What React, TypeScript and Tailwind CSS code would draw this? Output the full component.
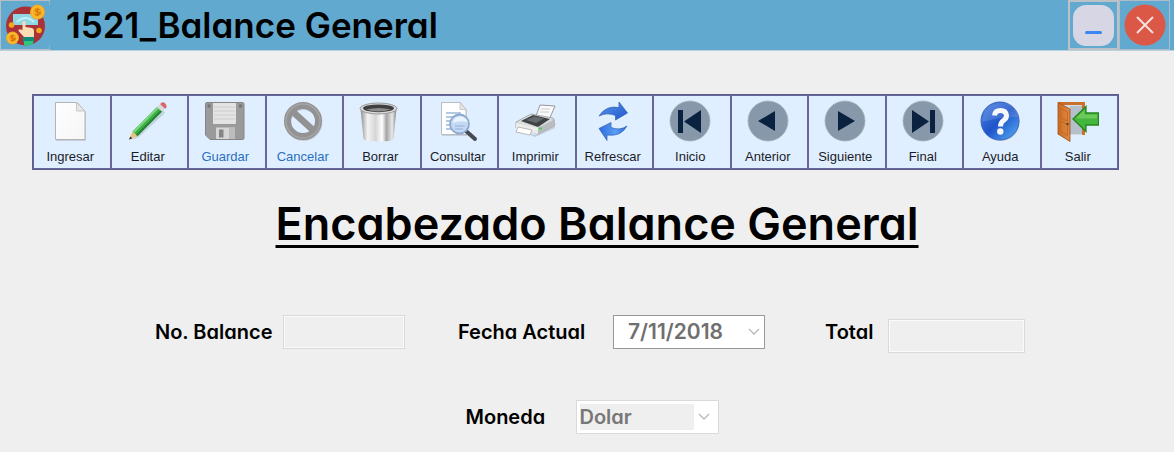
import type { ReactNode } from "react";

type Tool = { label: string; icon: ReactNode; disabled?: boolean };

function Icon({ children }: { children: ReactNode }) {
  return (
    <svg viewBox="0 0 42 42" className="size-[42px]" aria-hidden="true">
      {children}
    </svg>
  );
}

function PageIcon() {
  return (
    <Icon>
      <defs>
        <linearGradient id="page" x1="0" y1="0" x2="1" y2="1">
          <stop offset="0" stopColor="#fff" />
          <stop offset="1" stopColor="#f5f5f5" />
        </linearGradient>
      </defs>
      <path d="M7 3h22l8 9v29H7z" fill="#8b98a5" opacity=".35" />
      <path d="M6.500 2.500h21.500l8 9v28h-29.500z" fill="url(#page)" stroke="#b4b4b4" />
      <path d="M27.500 2.500v8.500h8.500z" fill="#e6e6e6" stroke="#bdbdbd" strokeWidth=".8" />
    </Icon>
  );
}

function PencilIcon() {
  return (
    <Icon>
      <path d="M5 40 36 10l2 3L12 37z" fill="#90a4ae" opacity=".4" />
      <path d="M2 39.500 5.500 31.500l5 4.500z" fill="#e8c27c" />
      <path d="M2 39.500 3.200 36.500l2.300 2z" fill="#333" />
      <path d="M5.500 31.500 30 7l5 4.500L10.500 36z" fill="#3fae49" />
      <path d="M5.500 31.500 30 7l1.700 1.500L7.200 33z" fill="#7bd67c" />
      <path d="M9 34.700 33.500 10.200l1.500 1.300L10.500 36z" fill="#23812e" />
      <path d="m30 7 3-3 5.200 4.600-3.200 2.900z" fill="#d7d9dc" />
      <path d="m33 4 1.500-1.300q2-1 3.800.8t1.200 4l-1.300 1.200z" fill="#d9666b" />
    </Icon>
  );
}

function DiskIcon() {
  return (
    <Icon>
      <path d="M2.500 2.500h36q1.500 0 1.500 1.500v34q0 1.500-1.500 1.500H6L1.500 35V4q0-1.500 1-1.500z" fill="#9a9a9a" stroke="#858585" />
      <path d="M9 3h23v20q0 1-1 1H10q-1 0-1-1z" fill="#e3e3e3" />
      <path d="M10 7h21M10 11h21M10 15h21M10 19h21" stroke="#cecece" />
      <path d="M3.500 4.500h3v3h-3zM35 4.500h3v3h-3z" fill="#737373" />
      <path d="M12 27.500h19V39H12z" fill="#d6d6d6" />
      <path d="M15 29.500h4.500v8H15z" fill="#858585" />
      <path d="M25 28h6v11h-6z" fill="#bcbcbc" />
    </Icon>
  );
}

function BlockIcon() {
  return (
    <Icon>
      <circle cx="21.500" cy="22" r="15.500" fill="none" stroke="#8a9299" strokeWidth="7" opacity=".3" />
      <circle cx="21" cy="21" r="15.500" fill="none" stroke="#929292" strokeWidth="7" />
      <path d="m10 11 22 20" stroke="#929292" strokeWidth="6.500" />
      <circle cx="21" cy="21" r="17" fill="none" stroke="#a5a5a5" strokeWidth="1.500" />
    </Icon>
  );
}

function BinIcon() {
  return (
    <Icon>
      <defs>
        <linearGradient id="bin">
          <stop offset="0" stopColor="#8f8f8f" />
          <stop offset=".2" stopColor="#f4f4f4" />
          <stop offset=".42" stopColor="#d5d5d5" />
          <stop offset=".6" stopColor="#fff" />
          <stop offset=".72" stopColor="#a5a5a5" />
          <stop offset=".88" stopColor="#e8e8e8" />
          <stop offset="1" stopColor="#858585" />
        </linearGradient>
      </defs>
      <path d="M1.500 9 4.500 39q1 2.500 15 2.500t15-2.500l3-30z" fill="url(#bin)" />
      <ellipse cx="19.500" cy="8.500" rx="18.500" ry="5.500" fill="#dadada" stroke="#999" />
      <ellipse cx="19.500" cy="8.300" rx="15.500" ry="3.900" fill="#3f3f3f" />
      <path d="M7 9.500q12 4 25 0-12-3-25 0z" fill="#8b8b8b" />
    </Icon>
  );
}

function SearchPageIcon() {
  return (
    <Icon>
      <path d="M5 3h19l6 7v26H5z" fill="#8c98a4" opacity=".35" />
      <path d="M4.500 2.500h18.500l6 7v25h-24.500z" fill="#fff" stroke="#b9bdc2" />
      <path d="M23 2.500v7h6z" fill="#e5e5e5" stroke="#bbb" strokeWidth=".7" />
      <path d="M9 13h15M9 17h13M9 21h8M9 25h6M9 29h8" stroke="#9bb8d8" strokeWidth="1.300" />
      <path d="m29 31 9 8" stroke="#444b52" strokeWidth="4" strokeLinecap="round" />
      <circle cx="22.500" cy="24" r="9.500" fill="#c4daf4" stroke="#8ea8cf" strokeWidth="1.800" />
      <path d="M15.500 23q2-7 8-6.500t7 5.500q-8-2-15 1z" fill="#eaf4ff" />
      <path d="M18 26h10M18 29h8" stroke="#92aedb" />
    </Icon>
  );
}

function PrinterIcon() {
  return (
    <Icon>
      <path d="M3 29 21 35l20-11v4L21 37z" fill="#8e9aa6" opacity=".4" />
      <path d="M22 16 26 5l15 1-6 14z" fill="#fafafa" stroke="#999" />
      <path d="M27 9h9M26 12h9" stroke="#c8ced4" />
      <path d="m2 22 15-8 22 4 2 7-17 9L2 28z" fill="#d9dbdc" stroke="#9a9c9e" strokeWidth=".8" />
      <path d="m7 21 12-6 17 4-12 8z" fill="#3f4244" />
      <path d="m12 20 8-3.500 10 2-8 4.500z" fill="#656a6e" />
      <path d="m24 28 17-9v5L24 34z" fill="#b9bcbe" />
      <path d="M2 23 24 28v6L2 29z" fill="#ececec" />
      <path d="m4 27 14 3-2 5-14-3z" fill="#fff" stroke="#a9abad" strokeWidth=".8" />
      <path d="M25 28.500h3" stroke="#45d04f" strokeWidth="2" />
    </Icon>
  );
}

function RefreshIcon() {
  return (
    <Icon>
      <defs>
        <linearGradient id="arrow-top" x1="0" y1="0" x2="1" y2="1">
          <stop offset="0" stopColor="#5b97ea" />
          <stop offset="1" stopColor="#1f58cc" />
        </linearGradient>
        <linearGradient id="arrow-bottom" x1="0" y1="0" x2="1" y2="0">
          <stop offset="0" stopColor="#2b6cdc" />
          <stop offset=".6" stopColor="#5c9df5" />
          <stop offset="1" stopColor="#2a66cf" />
        </linearGradient>
      </defs>
      <g stroke="#2c5fb5" strokeWidth=".7" strokeLinejoin="round">
        <path d="M7 16Q14 5 27 7.500V2L35.500 13 23.500 20v-4.500Q15 12 7 16z" fill="url(#arrow-top)" />
        <path d="M35 26Q29 37 15 35v5.500L7 28.500 19 22.500V27.500Q28 31 35 26z" fill="url(#arrow-bottom)" />
      </g>
    </Icon>
  );
}

function MediaIcon({ d }: { d: string }) {
  return (
    <Icon>
      <circle cx="21" cy="21" r="20" fill="#8798aa" stroke="#a9b3b8" strokeWidth=".8" />
      <path d={d} fill="#0a2240" />
    </Icon>
  );
}

function HelpIcon() {
  return (
    <Icon>
      <defs>
        <linearGradient id="help" x1="0" y1="0" x2="1" y2="1">
          <stop offset="0" stopColor="#4b83e2" />
          <stop offset=".5" stopColor="#1f54c9" />
          <stop offset="1" stopColor="#58b4fa" />
        </linearGradient>
      </defs>
      <circle cx="21.500" cy="22" r="19" fill="#8b98a8" opacity=".5" />
      <circle cx="21" cy="21" r="19" fill="url(#help)" stroke="#3a66bd" />
      <path d="M3 22Q4 4 21 3t18 14Q20 17 3 22z" fill="#fff" opacity=".13" />
      <path d="M15.500 15.500q.5-5 6-5t6 5q0 3-3 5t-3 6" fill="none" stroke="#f5f7fb" strokeWidth="5" />
      <circle cx="21.300" cy="31.500" r="3.200" fill="#f5f7fb" />
    </Icon>
  );
}

function ExitIcon() {
  return (
    <Icon>
      <defs>
        <linearGradient id="door">
          <stop offset="0" stopColor="#cf6b22" />
          <stop offset="1" stopColor="#e08a42" />
        </linearGradient>
      </defs>
      <path d="M1 2h27v33H1z" fill="#c8702c" />
      <path d="M4 5h21v30H4z" fill="#d4dce4" />
      <path d="M13 6h12v28H13z" fill="#b6c0cb" />
      <path d="M1 2.500 13 9v32.500L1 34z" fill="url(#door)" stroke="#9d4f16" strokeWidth=".8" />
      <path d="m3.500 8 7 4v9l-7-3zM3.500 21l7 3.500v11l-7-4z" fill="none" stroke="#b9662a" strokeWidth=".8" />
      <circle cx="10.500" cy="24" r="1.200" fill="#59401f" />
      <path d="M16 19 29 6.500V13h12.500v12H29v6.500z" fill="#43b73b" stroke="#25851f" strokeWidth="1.300" />
      <path d="m18.500 18.500 9-8.500v4.500h12.500v4z" fill="#8bdc77" opacity=".55" />
    </Icon>
  );
}

const tools: Tool[] = [
  { label: "Ingresar", icon: <PageIcon /> },
  { label: "Editar", icon: <PencilIcon /> },
  { label: "Guardar", icon: <DiskIcon />, disabled: true },
  { label: "Cancelar", icon: <BlockIcon />, disabled: true },
  { label: "Borrar", icon: <BinIcon /> },
  { label: "Consultar", icon: <SearchPageIcon /> },
  { label: "Imprimir", icon: <PrinterIcon /> },
  { label: "Refrescar", icon: <RefreshIcon /> },
  { label: "Inicio", icon: <MediaIcon d="M9 10h5v23H9zM15 21.500 32 10v23z" /> },
  { label: "Anterior", icon: <MediaIcon d="M11 21 28 11v20z" /> },
  { label: "Siguiente", icon: <MediaIcon d="M31 21 14 11v20z" /> },
  { label: "Final", icon: <MediaIcon d="M28 10h5v23h-5zM27 21.500 10 10v23z" /> },
  { label: "Ayuda", icon: <HelpIcon /> },
  { label: "Salir", icon: <ExitIcon /> },
];

function AppLogo() {
  return (
    <svg viewBox="0 0 50 50" className="size-[50px]" aria-hidden="true">
      <path d="M0 .500h50M.500 0v50M0 49.500h50M50 0v5M50 45v5" stroke="#b5bdc6" />
      <circle cx="25.500" cy="26" r="19.500" fill="#a83238" />
      <path d="M13 14h25v11H13z" fill="#8ed8e6" />
      <path d="M17 22q8-8 17 0" fill="none" stroke="#c4eff5" strokeWidth="2" />
      <path d="M22.500 22q1.500-2 3 0v5l6.500 1q2 .500 2 3V37h-10L18.500 31q-.5-3 4-1z" fill="#fbdcb4" />
      <path d="M23 37h11v5H23z" fill="#128a79" />
      <path d="M24 41h9v3.500q-5 1.500-9 1z" fill="#2fc57c" />
      <g fill="#f4a81c">
        <circle cx="37.500" cy="12" r="7.500" />
        <circle cx="12.500" cy="38" r="6.500" />
        <circle cx="11.500" cy="25" r="2.800" />
        <circle cx="39" cy="30.500" r="2.800" />
      </g>
      <g fill="none" stroke="#fbc543" strokeWidth="1.200">
        <circle cx="37.500" cy="12" r="5.500" />
        <circle cx="12.500" cy="38" r="4.700" />
      </g>
      <g fill="none" stroke="#d9780f" strokeWidth="1.300">
        <path d="M39.500 9.800q-3.500-1.500-3.700.5t3.200 2-1.200 2.700q-1.300 0-2.300-.6M37.500 8v8" />
        <path d="M14.300 36q-3-1.300-3.200.5t2.800 1.800-1 2.300q-1.200 0-2-.5M12.500 34.500v7" />
      </g>
    </svg>
  );
}

function Chevron() {
  return (
    <svg viewBox="0 0 12 8" className="h-2 w-3" aria-hidden="true">
      <path d="m1 1 5 5 5-5" fill="none" stroke="#b9b9b9" strokeWidth="1.300" />
    </svg>
  );
}

const fieldBox = "h-[34px] border border-[#dadada] bg-[#efefef] shadow-[inset_0_0_0_1px_#fafafa] outline-none";
const labelText = "text-[20px] leading-[34px] font-semibold whitespace-nowrap";

export default function App() {
  return (
    <div className="min-h-screen bg-[#efefef] font-['Inter',sans-serif] text-black [font-feature-settings:'cv11']">
      <header className="flex h-[51px] items-center border-b border-[#b9cfdb] bg-[#62a9cf]">
        <AppLogo />
        <h1 className="flex-1 pl-4 text-[35px] leading-[50px] font-semibold whitespace-nowrap">1521_Balance General</h1>
        <button type="button" aria-label="Minimizar" className="flex h-[50px] w-[51px] items-center justify-center border-2 border-[#bcc0c7]">
          <span className="flex size-[41px] items-end justify-center rounded-[13px] bg-[#d6d6e5] pb-3">
            <span className="h-[3px] w-[17px] rounded-full bg-[#3b86f0]" />
          </span>
        </button>
        <button type="button" aria-label="Cerrar" className="mr-1 flex h-[50px] w-[51px] items-center justify-center border border-[#aebbc8]">
          <svg viewBox="0 0 42 42" className="size-[42px]" aria-hidden="true">
            <circle cx="21" cy="21" r="20.500" fill="#db5847" />
            <path d="m13 13 16 16M29 13 13 29" stroke="#f8e0dd" strokeWidth="2" />
          </svg>
        </button>
      </header>

      <nav aria-label="Acciones" className="mt-[43px] mr-[55px] ml-8 grid grid-cols-14 border border-[#5d5c8e]">
        {tools.map(({ label, icon, disabled }) => (
          <button
            key={label}
            type="button"
            disabled={disabled}
            className="flex h-[74px] flex-col items-center border border-[#68679a] bg-[#dfefff] pt-1 pr-[3px]"
          >
            {icon}
            <span
              className={`mt-1 font-['Liberation_Sans',sans-serif] text-[13px] leading-[22px] ${
                disabled ? "text-[#2b6fc0]" : "text-[#1c1c28]"
              }`}
            >
              {label}
            </span>
          </button>
        ))}
      </nav>

      <main>
        <h2 className="mt-6 pl-5 text-center text-[45px] leading-[60px] font-semibold underline decoration-[3px] underline-offset-[5px]">
          Encabezado Balance General
        </h2>

        <form className="pt-[61px] pb-4 pl-[6px]">
          <div className="flex h-[38px] justify-center">
            <div className="flex">
              <label htmlFor="balance" className={`${labelText} w-[128px]`}>No. Balance</label>
              <input id="balance" readOnly className={`${fieldBox} w-[122px]`} />
            </div>
            <div className="ml-[53px] flex">
              <label htmlFor="fecha" className={`${labelText} w-[155px]`}>Fecha Actual</label>
              <div className="flex h-[34px] w-[152px] items-center border border-[#999] bg-white">
                <input
                  id="fecha"
                  readOnly
                  defaultValue="7/11/2018"
                  className="w-0 flex-1 pl-[14px] text-[21px] font-semibold text-[#707070] outline-none"
                />
                <button type="button" aria-label="Abrir calendario" className="px-1">
                  <Chevron />
                </button>
              </div>
            </div>
            <div className="ml-[60px] flex">
              <label htmlFor="total" className={`${labelText} w-[63px]`}>Total</label>
              <input id="total" readOnly className={`${fieldBox} w-[137px] self-end`} />
            </div>
          </div>

          <div className="mt-[47px] flex justify-center pl-1">
            <label htmlFor="moneda" className={`${labelText} w-[110px]`}>Moneda</label>
            <div className="flex h-[34px] w-[143px] items-center border border-[#dadada] bg-white p-[3px]">
              <select
                id="moneda"
                disabled
                className="h-full w-[114px] appearance-none bg-[#efefef] text-[20px] leading-[26px] font-semibold text-[#777] opacity-100 outline-none"
              >
                <option>Dolar</option>
              </select>
              <span className="flex flex-1 justify-center">
                <Chevron />
              </span>
            </div>
          </div>
        </form>
      </main>
    </div>
  );
}
